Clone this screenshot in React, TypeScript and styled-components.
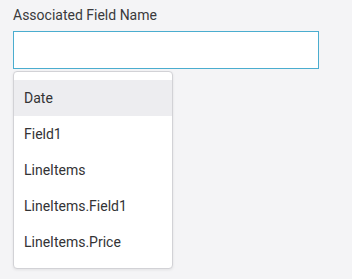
import styled, { createGlobalStyle } from "styled-components";

const GlobalStyle = createGlobalStyle`
  html, body {
    margin: 0;
    padding: 0;
    background: #f4f4f6;
    font-family: Roboto, "Noto Sans", sans-serif;
  }
`;

const options = ["Date", "Field1", "LineItems", "LineItems.Field1", "LineItems.Price"];

const App = () => {
  return (
    <>
      <GlobalStyle />
      <StyledPage>
        <StyledLabel>Associated Field Name</StyledLabel>
        <StyledField>
          <StyledInput type="text" />
          <StyledMenu>
            {options.map((option, i) => (
              <StyledOption key={option} $active={i === 0}>
                {option}
              </StyledOption>
            ))}
          </StyledMenu>
        </StyledField>
      </StyledPage>
    </>
  );
};

export default App;

const StyledPage = styled.div`
  width: 352px;
  height: 279px;
  box-sizing: border-box;
  padding: 5px 13px 0;
`;

const StyledLabel = styled.label`
  display: block;
  font-size: 14px;
  line-height: 20px;
  color: #3a3a3c;
  margin-bottom: 6px;
`;

const StyledField = styled.div`
  position: relative;
`;

const StyledInput = styled.input`
  display: block;
  box-sizing: border-box;
  width: 306px;
  height: 38px;
  margin: 0;
  border: 1px solid #4badcf;
  border-radius: 0;
  background: #fff;
  outline: none;
`;

const StyledMenu = styled.ul`
  position: absolute;
  top: 40px;
  left: 0;
  box-sizing: border-box;
  width: 160px;
  margin: 0;
  padding: 8px 0;
  list-style: none;
  background: #fff;
  border: 1px solid #d2d2d6;
  border-radius: 4px;
  box-shadow: 0 1px 3px rgba(0, 0, 0, 0.08);
`;

const StyledOption = styled.li<{ $active?: boolean }>`
  height: 36px;
  display: flex;
  align-items: center;
  padding: 0 10px;
  font-size: 14px;
  color: #333335;
  background: ${({ $active }) => ($active ? "#ededf0" : "#fff")};
`;
